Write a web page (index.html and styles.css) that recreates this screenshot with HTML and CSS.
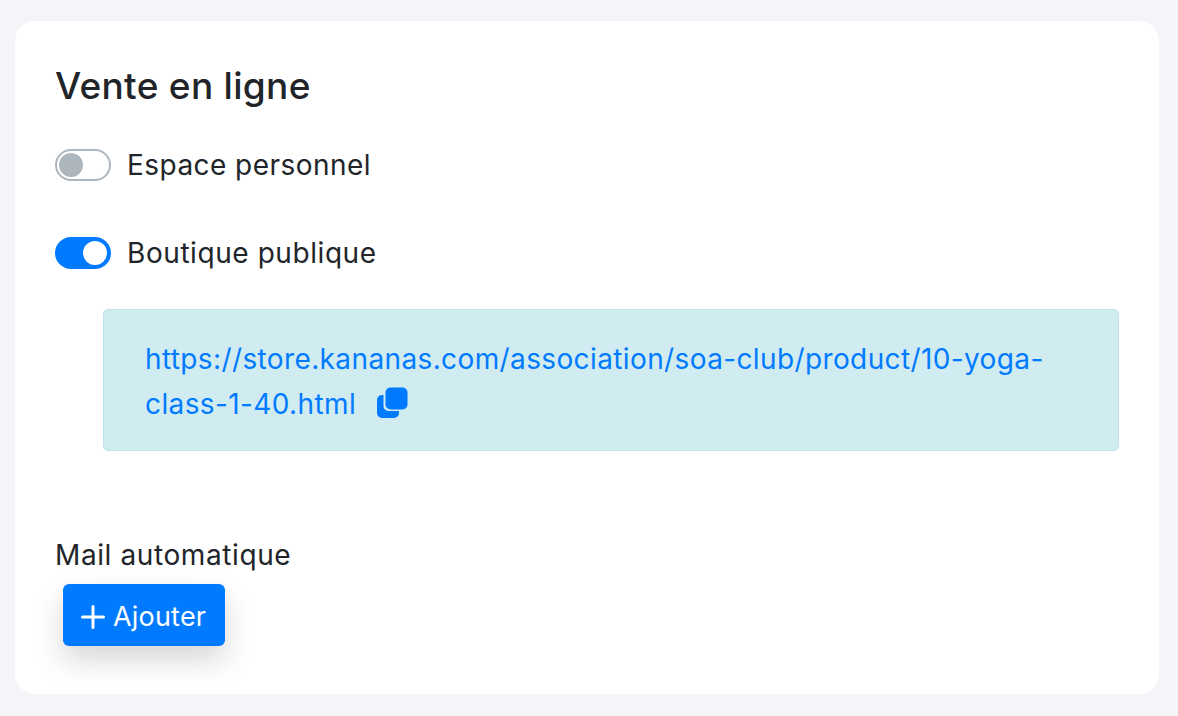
FILE: index.html
```html
<!DOCTYPE html>
<html lang="fr">
<head>
  <meta charset="UTF-8" />
  <meta name="viewport" content="width=device-width, initial-scale=1.0"/>
  <title>Vente en ligne</title>
  <link rel="stylesheet" href="styles.css">
</head>
<body>
  <div class="card">
    <h1>Vente en ligne</h1>

    <label class="switch-row">
      <span class="switch"></span>
      Espace personnel
    </label>

    <label class="switch-row on">
      <span class="switch"></span>
      Boutique publique
    </label>

    <div class="alert">
      <a href="#">https://store.kananas.com/association/soa-club/product/10-yoga-class-1-40.html</a>
      <svg class="copy" viewBox="0 0 32 32" width="32" height="32" fill="#007bff">
        <rect x="9.5" y="0.5" width="22" height="22" rx="5"/>
        <path d="M7.500 8V19a5 5 0 0 0 5 5h10.500V26a5 5 0 0 1-5 5H6a5 5 0 0 1-5-5V13a5 5 0 0 1 5-5z"/>
      </svg>
    </div>

    <div class="mail-label">Mail automatique</div>
    <button class="btn">
      <svg viewBox="0 0 24 24" width="24" height="24" fill="none" stroke="#fff" stroke-width="3" stroke-linecap="round">
        <path d="M12 1.500v21M1.500 12h21"/>
      </svg>
      Ajouter
    </button>
  </div>
</body>
</html>
```

FILE: styles.css
```css
body {
  margin: 0;
  background: #f4f5f9;
  color: #212529;
  font-family: Inter, "Liberation Sans", sans-serif;
  font-size: 28px;
  letter-spacing: .45px;
  line-height: 40px;
  padding: 21px 19px 22px 15px;
}
.card {
  background: #fff;
  border-radius: 20px;
  height: 673px;
  box-sizing: border-box;
  padding: 43px 40px 0;
}
h1 {
  margin: 0 0 37px;
  font-size: 37px;
  letter-spacing: .3px;
  line-height: 44px;
  font-weight: 500;
}
.switch-row {
  display: flex;
  align-items: center;
  gap: 16px;
  height: 40px;
  margin-bottom: 48px;
}
.switch {
  position: relative;
  width: 56px;
  height: 32px;
  box-sizing: border-box;
  border: 2px solid #adb5bd;
  border-radius: 16px;
  background: #fff;
}
.switch::after {
  content: "";
  position: absolute;
  top: 2px;
  left: 2px;
  width: 24px;
  height: 24px;
  border-radius: 50%;
  background: #adb5bd;
}
.on {
  letter-spacing: .57px;
}
.on .switch {
  background: #007bff;
  border-color: #007bff;
}
.on .switch::after {
  left: 26px;
  background: #fff;
}
.alert {
  margin: -12px 0 0 48px;
  width: 1016px;
  height: 142px;
  box-sizing: border-box;
  padding: 27px 41px;
  background: #d1ecf1;
  border: 1px solid #bee5eb;
  border-radius: 5px;
  letter-spacing: .38px;
  line-height: 45px;
}
.alert a {
  color: #007bff;
  text-decoration: none;
}
.copy {
  margin-left: 12px;
  vertical-align: -5px;
}
.mail-label {
  margin-top: 84px;
  letter-spacing: .6px;
}
.btn {
  display: flex;
  align-items: center;
  gap: 8px;
  margin: 9px 0 0 8px;
  height: 62px;
  padding: 3px 19px 0 18px;
  background: #007bff;
  color: #fff;
  border: none;
  border-radius: 6px;
  font: inherit;
  font-size: 27px;
  letter-spacing: .2px;
  box-shadow: 0 14px 30px rgba(0, 0, 0, .16);
}
```
